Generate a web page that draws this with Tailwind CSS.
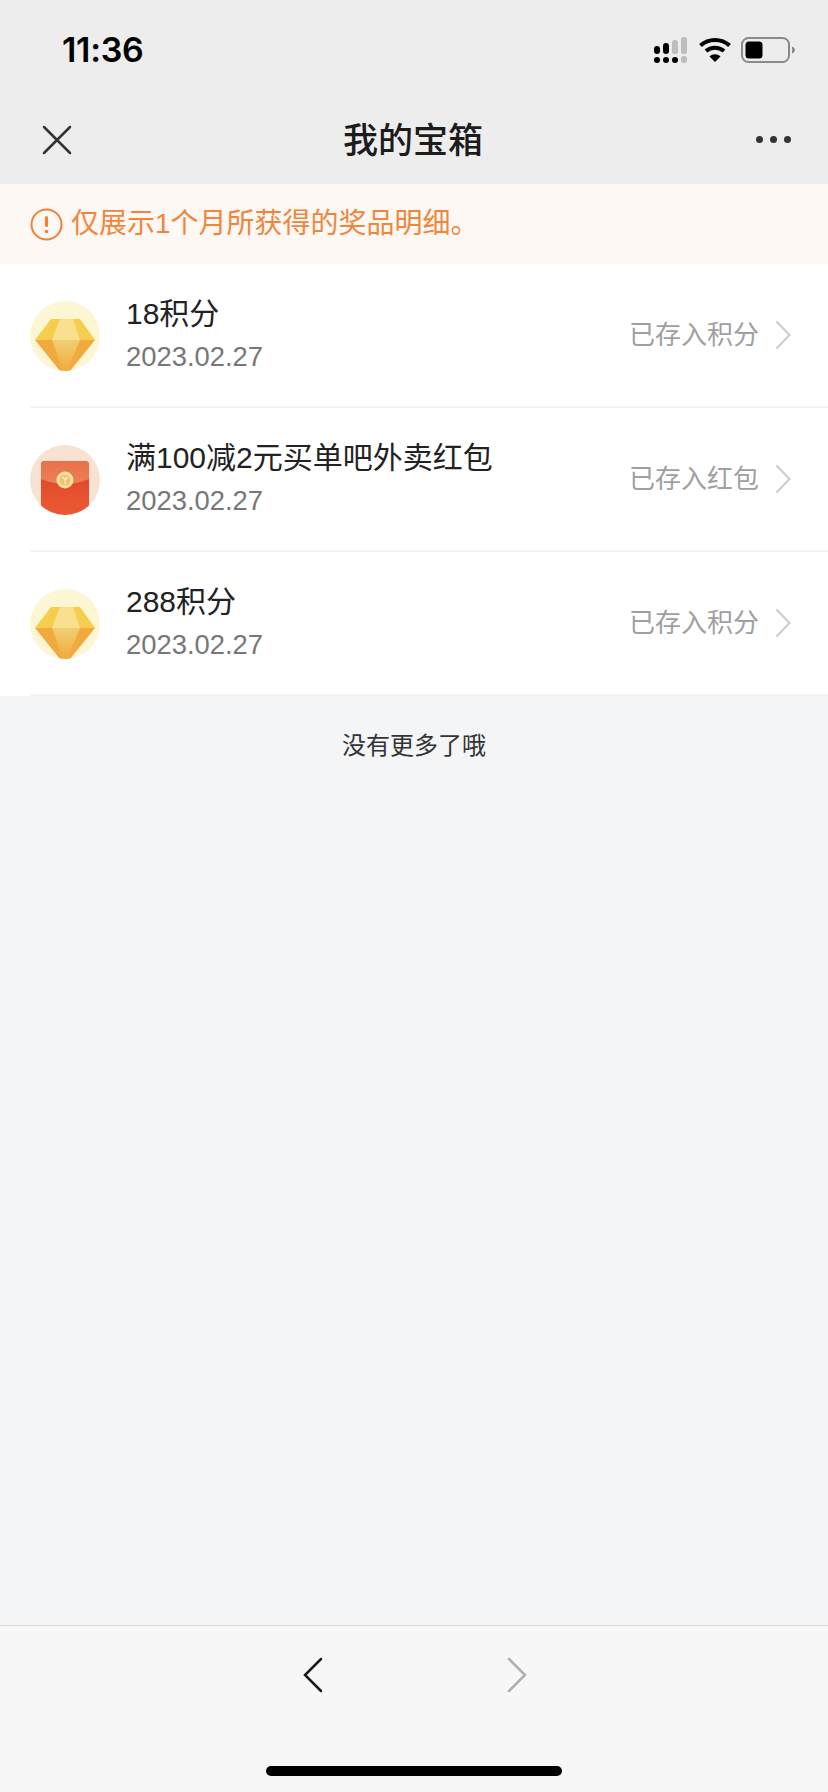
<!DOCTYPE html>
<html lang="zh-CN">
<head>
    <meta charset="UTF-8">
    <meta name="viewport" content="width=device-width, initial-scale=1.0">
    <title>我的宝箱</title>
    <script src="https://cdn.jsdelivr.net/npm/@tailwindcss/browser@4"></script>
</head>
<body class="bg-[#f4f5f7] font-['Liberation_Sans','Noto_Sans_CJK_SC',sans-serif]">
    <div class="flex h-[1792px] w-[828px] flex-col overflow-hidden">

        <!-- status bar + nav -->
        <header class="bg-[#ededed]">
            <div class="flex h-[97px] items-center justify-between pt-[2px] pl-[62px] pr-[33px]">
                <span class="font-['Inter',sans-serif] text-[34px] leading-none font-semibold tracking-[-0.3px] text-black">11:36</span>
                <div class="flex items-center gap-[10px]">
                    <svg class="mr-[1px]" width="34" height="26" viewBox="0 0 34 26">
                        <g fill="#000">
                            <rect x="0" y="9" width="6" height="8" rx="3"/>
                            <rect x="9" y="6" width="6" height="11" rx="3"/>
                            <circle cx="3" cy="23" r="3"/><circle cx="12" cy="23" r="3"/><circle cx="21" cy="23" r="3"/>
                        </g>
                        <g fill="#bdbdbd">
                            <rect x="18" y="3" width="6" height="14" rx="2.5"/>
                            <rect x="27" y="0" width="6" height="17" rx="2.5"/>
                            <rect x="27" y="19" width="6" height="7" rx="2.5"/>
                        </g>
                    </svg>
                    <svg width="32" height="26" viewBox="0 0 32 26" fill="none">
                        <path d="M1.500 8.500C9.500 1 22.500 1 30.500 8.500" stroke="#000" stroke-width="4"/>
                        <path d="M7 14C12 9.500 20 9.500 25 14" stroke="#000" stroke-width="4"/>
                        <path d="M10.500 19.500C13.500 16.500 18.500 16.500 21.500 19.500L16 25Z" fill="#000"/>
                    </svg>
                    <svg width="54" height="26" viewBox="0 0 54 26" fill="none">
                        <rect x="1" y="1" width="47" height="24" rx="6.5" stroke="#8a8a8a" stroke-width="2"/>
                        <rect x="4.500" y="4.500" width="17" height="17" rx="3.500" fill="#000"/>
                        <path d="M51 9.500C53 10.500 54 11.500 54 13C54 14.500 53 15.500 51 16.500Z" fill="#8a8a8a"/>
                    </svg>
                </div>
            </div>
            <nav class="relative flex h-[87px] items-center justify-between pb-[2px] pl-[42px] pr-[37px]">
                <svg width="30" height="30" viewBox="0 0 30 30" fill="none">
                    <path d="M2 2L28 28M28 2L2 28" stroke="#333" stroke-width="2.500" stroke-linecap="round"/>
                </svg>
                <h1 class="absolute left-[343px] mt-[2px] text-[35px] leading-none font-medium text-[#1c1c1c]">我的宝箱</h1>
                <div class="flex gap-[7px]">
                    <span class="size-[7px] rounded-full bg-[#333]"></span>
                    <span class="size-[7px] rounded-full bg-[#333]"></span>
                    <span class="size-[7px] rounded-full bg-[#333]"></span>
                </div>
            </nav>
        </header>

        <!-- notice -->
        <div class="flex h-[80px] items-center gap-[8px] bg-[#fdf8f4] pl-[30px]">
            <svg width="33" height="33" viewBox="0 0 33 33" fill="none">
                <circle cx="16.500" cy="16.500" r="15" stroke="#f08035" stroke-width="2"/>
                <rect x="15" y="8" width="3" height="11" rx="1.500" fill="#f08035"/>
                <circle cx="16.500" cy="23.500" r="1.800" fill="#f08035"/>
            </svg>
            <p class="text-[28px] leading-none text-[#f2853c]">仅展示1个月所获得的奖品明细。</p>
        </div>

        <!-- prize list -->
        <ul class="bg-white pl-[30px]">
            <li class="flex h-[144px] items-center border-b-[2px] border-[#f2f2f2] pr-[37px]">
                <svg class="mt-[2px] shrink-0" width="70" height="70" viewBox="0 0 70 70">
                    <defs>
                        <clipPath id="c1"><circle cx="35" cy="35" r="35"/></clipPath>
                        <linearGradient id="g1" x1="0" y1="0" x2="0" y2="1"><stop offset="0" stop-color="#efce75"/><stop offset="1" stop-color="#f2ab39"/></linearGradient>
                    </defs>
                    <circle cx="35" cy="35" r="35" fill="#fdf6d5"/>
                    <g clip-path="url(#c1)">
                        <path d="M21 18H50L65 39H5Z" fill="#f6ce4d"/>
                        <path d="M30 18H43L50 39H22Z" fill="#f8e08f"/>
                        <path d="M5 39H65L40 70H30Z" fill="#f2aa3c"/>
                        <path d="M22 39H50L37 70H33Z" fill="url(#g1)"/>
                    </g>
                </svg>
                <div class="ml-[26px] flex-1">
                    <p class="text-[30px] leading-[36px] text-[#222]">18积分</p>
                    <p class="mt-[8px] text-[27.400px] leading-[34px] text-[#777]">2023.02.27</p>
                </div>
                <span class="text-[26px] leading-none text-[#a0a0a0]">已存入积分</span>
                <svg class="ml-[16px]" width="16" height="30" viewBox="0 0 16 30" fill="none">
                    <path d="M1.500 1.500L14.500 15L1.500 28.500" stroke="#ccc" stroke-width="2"/>
                </svg>
            </li>
            <li class="flex h-[144px] items-center border-b-[2px] border-[#f2f2f2] pr-[37px]">
                <svg class="mt-[2px] shrink-0" width="70" height="70" viewBox="0 0 70 70">
                    <defs>
                        <clipPath id="c2"><circle cx="35" cy="35" r="35"/></clipPath>
                        <linearGradient id="g2" x1="0" y1="0" x2="0" y2="1"><stop offset="0" stop-color="#e9704a"/><stop offset="1" stop-color="#ee8058"/></linearGradient>
                        <linearGradient id="g3" x1="0" y1="0" x2="0" y2="1"><stop offset="0" stop-color="#e0412a"/><stop offset="1" stop-color="#ea5a34"/></linearGradient>
                    </defs>
                    <circle cx="35" cy="35" r="35" fill="#f8e3d2"/>
                    <g clip-path="url(#c2)">
                        <path d="M11 20Q11 16 15 16H55Q59 16 59 20V70H11Z" fill="url(#g3)"/>
                        <path d="M11 20Q11 16 15 16H55Q59 16 59 20V34Q35 44 11 34Z" fill="url(#g2)"/>
                    </g>
                    <circle cx="35" cy="35" r="8.500" fill="#fbe3a6"/>
                    <circle cx="35" cy="35" r="5.500" fill="#f3c467"/>
                    <path d="M32.500 32L35 35L37.500 32M35 35V39" stroke="#fbeecb" stroke-width="1.200" fill="none"/>
                </svg>
                <div class="ml-[26px] flex-1">
                    <p class="text-[30px] leading-[36px] text-[#222]">满100减2元买单吧外卖红包</p>
                    <p class="mt-[8px] text-[27.400px] leading-[34px] text-[#777]">2023.02.27</p>
                </div>
                <span class="text-[26px] leading-none text-[#a0a0a0]">已存入红包</span>
                <svg class="ml-[16px]" width="16" height="30" viewBox="0 0 16 30" fill="none">
                    <path d="M1.500 1.500L14.500 15L1.500 28.500" stroke="#ccc" stroke-width="2"/>
                </svg>
            </li>
            <li class="flex h-[144px] items-center border-b-[2px] border-[#f2f2f2] pr-[37px]">
                <svg class="mt-[2px] shrink-0" width="70" height="70" viewBox="0 0 70 70">
                    <circle cx="35" cy="35" r="35" fill="#fdf6d5"/>
                    <g clip-path="url(#c1)">
                        <path d="M21 18H50L65 39H5Z" fill="#f6ce4d"/>
                        <path d="M30 18H43L50 39H22Z" fill="#f8e08f"/>
                        <path d="M5 39H65L40 70H30Z" fill="#f2aa3c"/>
                        <path d="M22 39H50L37 70H33Z" fill="url(#g1)"/>
                    </g>
                </svg>
                <div class="ml-[26px] flex-1">
                    <p class="text-[30px] leading-[36px] text-[#222]">288积分</p>
                    <p class="mt-[8px] text-[27.400px] leading-[34px] text-[#777]">2023.02.27</p>
                </div>
                <span class="text-[26px] leading-none text-[#a0a0a0]">已存入积分</span>
                <svg class="ml-[16px]" width="16" height="30" viewBox="0 0 16 30" fill="none">
                    <path d="M1.500 1.500L14.500 15L1.500 28.500" stroke="#ccc" stroke-width="2"/>
                </svg>
            </li>
        </ul>

        <main class="flex-1 pt-[34px] text-center text-[24px] leading-[32px] text-[#333]">没有更多了哦</main>

        <!-- bottom toolbar -->
        <footer class="relative h-[167px] border-t border-[#d9d9d9] bg-[#f7f7f7]">
            <div class="flex h-[96px] items-center gap-[184px] pl-[302px] pt-[1px]">
                <svg width="21" height="36" viewBox="0 0 21 36" fill="none">
                    <path d="M19 2L3 18L19 34" stroke="#1a1a1a" stroke-width="2.500" stroke-linecap="round"/>
                </svg>
                <svg width="21" height="36" viewBox="0 0 21 36" fill="none">
                    <path d="M2 2L18 18L2 34" stroke="#b0b0b0" stroke-width="2.500" stroke-linecap="round"/>
                </svg>
            </div>
            <div class="absolute top-[140px] left-[266px] h-[10px] w-[296px] rounded-full bg-black"></div>
        </footer>
    </div>
</body>
</html>
